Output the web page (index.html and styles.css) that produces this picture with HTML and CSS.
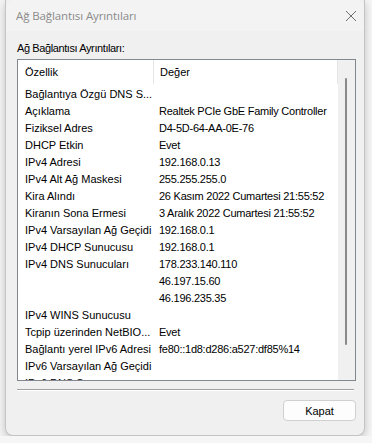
FILE: index.html
```html
<!DOCTYPE html>
<html lang="tr">
<head>
  <meta charset="UTF-8">
  <title>Ağ Bağlantısı Ayrıntıları</title>
  <link rel="stylesheet" href="styles.css">
</head>
<body>
  <div class="window">
    <div class="titlebar">
      <span class="title">Ağ Bağlantısı Ayrıntıları</span>
      <svg class="close" width="12" height="12" viewBox="0 0 12 12">
        <path d="M1 1 L11 11 M11 1 L1 11" stroke="#6f6f6f" stroke-width="1" fill="none"/>
      </svg>
    </div>

    <div class="content">
      <p class="label">Ağ Bağlantısı Ayrıntıları:</p>

      <div class="list">
        <div class="list-body">
          <div class="list-header">
            <div class="col-name">Özellik</div>
            <div class="col-value">Değer</div>
          </div>
          <div class="row"><span class="cell-name">Bağlantıya Özgü DNS S...</span><span class="cell-value"></span></div>
          <div class="row"><span class="cell-name">Açıklama</span><span class="cell-value">Realtek PCIe GbE Family Controller</span></div>
          <div class="row"><span class="cell-name">Fiziksel Adres</span><span class="cell-value">D4-5D-64-AA-0E-76</span></div>
          <div class="row"><span class="cell-name">DHCP Etkin</span><span class="cell-value">Evet</span></div>
          <div class="row"><span class="cell-name">IPv4 Adresi</span><span class="cell-value">192.168.0.13</span></div>
          <div class="row"><span class="cell-name">IPv4 Alt Ağ Maskesi</span><span class="cell-value">255.255.255.0</span></div>
          <div class="row"><span class="cell-name">Kira Alındı</span><span class="cell-value">26 Kasım 2022 Cumartesi 21:55:52</span></div>
          <div class="row"><span class="cell-name">Kiranın Sona Ermesi</span><span class="cell-value">3 Aralık 2022 Cumartesi 21:55:52</span></div>
          <div class="row"><span class="cell-name">IPv4 Varsayılan Ağ Geçidi</span><span class="cell-value">192.168.0.1</span></div>
          <div class="row"><span class="cell-name">IPv4 DHCP Sunucusu</span><span class="cell-value">192.168.0.1</span></div>
          <div class="row"><span class="cell-name">IPv4 DNS Sunucuları</span><span class="cell-value">178.233.140.110</span></div>
          <div class="row"><span class="cell-name"></span><span class="cell-value">46.197.15.60</span></div>
          <div class="row"><span class="cell-name"></span><span class="cell-value">46.196.235.35</span></div>
          <div class="row"><span class="cell-name">IPv4 WINS Sunucusu</span><span class="cell-value"></span></div>
          <div class="row"><span class="cell-name">Tcpip üzerinden NetBIO...</span><span class="cell-value">Evet</span></div>
          <div class="row"><span class="cell-name">Bağlantı yerel IPv6 Adresi</span><span class="cell-value">fe80::1d8:d286:a527:df85%14</span></div>
          <div class="row"><span class="cell-name">IPv6 Varsayılan Ağ Geçidi</span><span class="cell-value"></span></div>
          <div class="row"><span class="cell-name">IPv6 DNS S...</span><span class="cell-value"></span></div>
        </div>
        <div class="scrollbar">
          <div class="thumb"></div>
        </div>
      </div>

      <div class="separator"></div>

      <div class="footer">
        <button class="button">Kapat</button>
      </div>
    </div>
  </div>
</body>
</html>
```

FILE: styles.css
```css
* {
  box-sizing: border-box;
}

body {
  margin: 0;
  padding: 0;
  background: #f6f6f6;
  font-family: 'Liberation Sans', Arial, sans-serif;
  overflow: hidden;
}

.window {
  margin-left: 5px;
  width: 360px;
  height: 436px;
  background: #f0f0f0;
  border: 1px solid #c4c4c4;
  border-top: none;
  border-radius: 0 0 8px 8px;
  box-shadow: 0 3px 10px rgba(0, 0, 0, 0.22);
  overflow: hidden;
}

.titlebar {
  height: 31px;
  display: flex;
  align-items: center;
  padding: 0 0 0 10px;
  background: #f3f3f3;
  border-radius: 8px 8px 0 0;
}

.title {
  font-family: 'Open Sans', sans-serif;
  font-size: 11.5px;
  color: #8b8b8b;
  letter-spacing: -0.1px;
}

.close {
  margin-left: auto;
  margin-right: 7px;
}

.content {
  padding: 0 0 0 11px;
}

.label {
  margin: 10px 0 0 0;
  height: 18px;
  font-size: 11px;
  line-height: 14px;
  letter-spacing: -0.4px;
  color: #000;
}

.list {
  width: 339px;
  height: 322px;
  border: 1px solid #828790;
  background: #fff;
  display: flex;
  overflow: hidden;
}

.list-body {
  flex: 1;
  overflow: hidden;
}

.list-header {
  height: 26px;
  display: flex;
  font-size: 11px;
  line-height: 24px;
  color: #000;
}

.col-name {
  width: 136px;
  padding-left: 7px;
  border-right: 1px solid #e5e5e5;
  margin-bottom: 2px;
}

.col-value {
  flex: 1;
  padding-left: 6px;
  border-right: 1px solid #e5e5e5;
  margin-bottom: 2px;
}

.row {
  height: 17px;
  display: flex;
  font-size: 11px;
  line-height: 17px;
  color: #000;
  white-space: nowrap;
}

.cell-name {
  width: 135px;
  flex-shrink: 0;
  padding-left: 7px;
}

.cell-value {
  padding-left: 6px;
  letter-spacing: -0.25px;
}

.scrollbar {
  width: 17px;
  flex-shrink: 0;
  background: #f0f0f0;
  position: relative;
}

.thumb {
  position: absolute;
  left: 7px;
  top: 18px;
  width: 2px;
  height: 267px;
  background: #8a8a8a;
  border-radius: 1px;
}

.separator {
  width: 337px;
  margin-top: 8px;
  border-top: 1px solid #a0a0a0;
  border-bottom: 1px solid #ffffff;
}

.footer {
  width: 339px;
  display: flex;
  justify-content: flex-end;
  margin-top: 9px;
}

.button {
  width: 73px;
  height: 21px;
  padding: 0;
  font-family: 'Liberation Sans', Arial, sans-serif;
  font-size: 11px;
  color: #000;
  background: #fdfdfd;
  border: 1px solid #d0d0d0;
  border-radius: 4px;
}
```
